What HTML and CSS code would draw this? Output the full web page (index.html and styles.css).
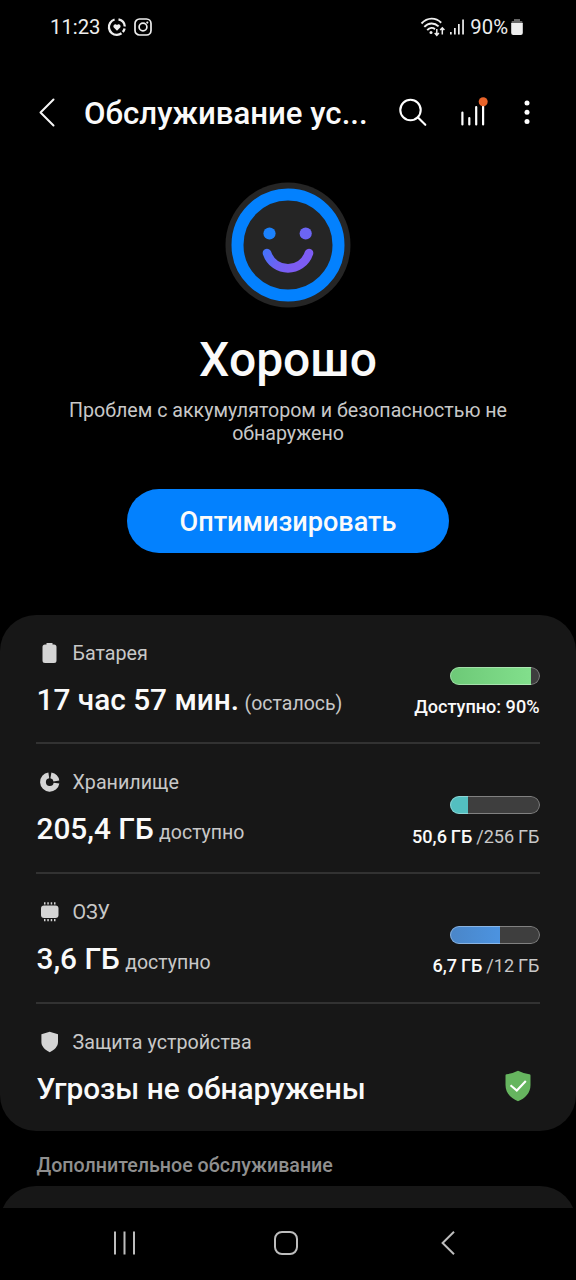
FILE: index.html
```html
<!DOCTYPE html>
<html lang="ru">
<head>
<meta charset="utf-8">
<title>Обслуживание устройства</title>
<link rel="stylesheet" href="styles.css">
</head>
<body>
<div class="screen">
  <header class="status">
    <div class="status-left">
      <span class="clock">11:23</span>
      <svg class="status-icon" width="18" height="18" viewBox="0 0 18 18" fill="none" stroke="#eee" stroke-width="2.3"><path d="M6.600 1.500A7.800 7.800 0 0 0 9 16.800 7.800 7.800 0 0 0 13.500 15.300M10.500 1.400A7.800 7.800 0 0 1 16.800 8.500M16.600 10.500A8 8 0 0 1 14.800 14"/><path d="M9 12.800 5.800 9.500C4.400 7.600 7.200 4.900 9 7c1.800-2.100 4.600.6 3.200 2.500z" fill="#eee" stroke="none"/></svg>
      <svg class="status-icon" width="18" height="18" viewBox="0 0 18 18" fill="none" stroke="#eee" stroke-width="1.7"><rect x="1" y="1" width="16" height="16" rx="4.5"/><circle cx="9" cy="9" r="3.9"/><circle cx="13.3" cy="4.6" r="1.1" fill="#eee" stroke="none"/></svg>
    </div>
    <div class="status-right">
      <svg width="26" height="20" viewBox="0 0 26 20" fill="none" stroke="#eee" stroke-width="1.9"><path d="M1.500 6.500C7.500.2 15.500.2 21.200 5.700"/><path d="M4.300 9.900C8.500 5.400 14.500 5.400 18.600 9.400"/><path d="M7.200 13.200C9.800 10.400 13 10.400 15 12.200"/><circle cx="11" cy="15.500" r="1.500" fill="#eee" stroke="none"/><path d="M16.800 12v6.300M14.700 16.100l2.100 2.200 2.100-2.200M22.300 17.500V11M20.200 13.100l2.100-2.200 2.100 2.200" stroke-width="1.500"/></svg>
      <svg width="16" height="18" viewBox="0 0 16 18" fill="#eee"><path d="M1 14h1.700v2.500H1zM5 10h1.700v6.500H5zM9 6h1.700v10.500H9zM13.200 1.500h1.700v15h-1.700z"/></svg>
      <span class="percent">90%</span>
      <svg width="12" height="18" viewBox="0 0 12 18"><path d="M3 1h6v2h1.500q1 0 1 1V6H.5V4q0-1 1-1H3z" fill="#666"/><path d="M.2 5h11.600v10q0 2-2 2H2.200q-2 0-2-2z" fill="#eee"/></svg>
    </div>
  </header>

  <nav class="appbar">
    <svg class="back" width="18" height="30" viewBox="0 0 18 30" fill="none" stroke="#f5f5f5" stroke-width="2" stroke-linecap="round" stroke-linejoin="round"><path d="M15.500 1.500 2.500 14.500l13 13"/></svg>
    <h1 class="title">Обслуживание ус...</h1>
    <svg class="search" width="28" height="28" viewBox="0 0 28 28" fill="none" stroke="#fff" stroke-width="2.100" stroke-linecap="round"><circle cx="11.500" cy="11" r="10.200"/><path d="m19 18.500 7.300 7.300"/></svg>
    <svg class="chart" width="30" height="30" viewBox="0 0 30 30"><path d="M2.400 14.500v12M9.300 20v6.500M16.200 9v17.500M23.100 6v20.500" stroke="#fff" stroke-width="2.200" stroke-linecap="round"/><circle cx="23.200" cy="3.800" r="4.500" fill="#e8642a"/></svg>
    <svg class="more" width="6" height="26" viewBox="0 0 6 26" fill="#fff"><circle cx="3" cy="2.900" r="2.500"/><circle cx="3" cy="12.200" r="2.500"/><circle cx="3" cy="21.600" r="2.500"/></svg>
  </nav>

  <section class="hero">
    <svg class="face" width="126" height="126" viewBox="0 0 126 126">
      <defs><linearGradient id="mood" gradientUnits="userSpaceOnUse" x1="38" y1="50" x2="88" y2="82"><stop offset="0" stop-color="#2a7dfb"/><stop offset=".5" stop-color="#6f62f5"/><stop offset=".75" stop-color="#7d5cf3"/><stop offset="1" stop-color="#7d5cf3"/></linearGradient></defs>
      <circle cx="63" cy="63" r="62.500" fill="#252525"/>
      <circle cx="63" cy="63" r="50.500" fill="none" stroke="#0381fe" stroke-width="12"/>
      <circle cx="44.500" cy="51.500" r="6.100" fill="#1b82fc"/>
      <circle cx="80.700" cy="51.500" r="6.100" fill="#6c65f4"/>
      <path d="M42 71C49 91.500 77 91.500 84 71" fill="none" stroke="url(#mood)" stroke-width="8.600" stroke-linecap="round"/>
    </svg>
    <h2 class="verdict">Хорошо</h2>
    <p class="summary">Проблем с аккумулятором и безопасностью не обнаружено</p>
    <button class="optimize">Оптимизировать</button>
  </section>

  <main class="card">
    <section class="row">
      <div class="info">
        <div class="label"><svg width="26" height="24" viewBox="0 0 26 24" fill="#d4d4d4"><path d="M10.500 1h6v1.500H18Q20.500 2.500 20.500 5v13.500Q20.500 21 18 21H9Q6.500 21 6.500 18.500V5Q6.500 2.500 9 2.500h1.500z"/></svg><span>Батарея</span></div>
        <div class="value">17 час 57 мин. <small>(осталось)</small></div>
      </div>
      <div class="usage"><div class="meter"><div class="fill battery" style="width:90%"></div></div><div class="amount"><b>Доступно: 90%</b></div></div>
    </section>
    <section class="row">
      <div class="info">
        <div class="label"><svg width="26" height="24" viewBox="0 0 26 24" fill="none" stroke="#d4d4d4" stroke-width="5.800"><path d="M12.800 4.300a6.800 6.800 0 1 0 7.700 7.800"/><path d="M14.900 4.300a6.800 6.800 0 0 1 5.500 5.700"/></svg><span>Хранилище</span></div>
        <div class="value">205,4 ГБ <small>доступно</small></div>
      </div>
      <div class="usage"><div class="meter"><div class="fill storage" style="width:20%"></div></div><div class="amount"><b>50,6 ГБ</b> /256 ГБ</div></div>
    </section>
    <section class="row">
      <div class="info">
        <div class="label"><svg width="26" height="24" viewBox="0 0 26 24" fill="#d4d4d4"><rect x="5" y="4.500" width="17.500" height="12.500" rx="3"/><path d="M8 1.200h1.500v2.200H8zM11.300 1.200h1.500v2.200h-1.500zM14.700 1.200h1.500v2.200h-1.500zM18 1.200h1.500v2.200H18zM8 18.100h1.500v2.200H8zM11.300 18.100h1.500v2.200h-1.500zM14.700 18.100h1.500v2.200h-1.500zM18 18.100h1.500v2.200H18z"/></svg><span>ОЗУ</span></div>
        <div class="value">3,6 ГБ <small>доступно</small></div>
      </div>
      <div class="usage"><div class="meter"><div class="fill memory" style="width:55%"></div></div><div class="amount"><b>6,7 ГБ</b> /12 ГБ</div></div>
    </section>
    <section class="row">
      <div class="info">
        <div class="label"><svg width="26" height="24" viewBox="0 0 26 24" fill="#d4d4d4"><path d="M13.700.8 22 3.200v7.800c0 4.500-3.600 8-8.300 10.200C9 19 5.400 15.500 5.400 11V3.200z"/></svg><span>Защита устройства</span></div>
        <div class="value">Угрозы не обнаружены</div>
      </div>
      <svg class="safe" width="26" height="32" viewBox="0 0 26 32"><path d="M13 .8Q19 3.800 24.300 4.200q1.200.1 1.200 1.300V15C25.500 23 20 28.500 13 31.300 6 28.500.5 23 .5 15V5.500Q.5 4.300 1.700 4.200 7 3.800 13 .8z" fill="#66b55f"/><path d="m5.500 15.300 6.300 5.200 9-9.500" fill="none" stroke="#fff" stroke-width="2.100"/></svg>
    </section>
  </main>

  <h3 class="section-title">Дополнительное обслуживание</h3>
  <div class="card next"></div>

  <footer class="navbar">
    <svg width="24" height="24" viewBox="0 0 24 24" stroke="#bdbdbd" stroke-width="2"><path d="M2 .5v23M11.500.5v23M21 .5v23"/></svg>
    <svg width="24" height="24" viewBox="0 0 24 24" fill="none" stroke="#bdbdbd" stroke-width="2"><rect x="1" y="1" width="22" height="22" rx="7"/></svg>
    <svg class="nav-back" width="14" height="24" viewBox="0 0 14 24" fill="none" stroke="#bdbdbd" stroke-width="2"><path d="M13 .8 1.600 12 13 23.200"/></svg>
  </footer>
</div>
</body>
</html>
```
FILE: styles.css
```css
* { box-sizing: border-box; }
body { margin: 0; background: #000; color: #fafafa; font-family: Roboto, sans-serif; }
h1, h2, h3, p { margin: 0; font-weight: 500; white-space: nowrap; }
svg { display: block; flex: none; overflow: visible; }
.screen { width: 576px; height: 1280px; overflow: hidden; display: flex; flex-direction: column; }

.status { height: 53px; flex: none; padding: 0 53px 0 50px; display: flex; justify-content: space-between; align-items: center; font-size: 20.3px; color: #eee; }
.status-left, .status-right { display: flex; align-items: center; }
.status-icon { margin-left: 7.5px; }
.status-right svg:nth-child(2) { margin-left: 3px; }
.percent { margin: 0 3px 0 5px; }

.appbar { height: 119px; flex: none; display: flex; align-items: center; padding-left: 38px; }
.title { width: 286px; margin-left: 28px; font-size: 31.2px; line-height: 40px; padding-top: 3px; }
.search { margin-left: 29px; }
.chart { margin-left: 33px; }
.more { margin-left: 34px; }

.hero { height: 443px; flex: none; display: flex; flex-direction: column; align-items: center; padding-top: 10px; }
.face { margin-right: 1px; }
.verdict { margin-top: 24px; font-size: 48px; line-height: 56px; }
.summary { width: 460px; margin-top: 11px; font-size: 19.63px; line-height: 23px; font-weight: 400; color: #c8c8c8; text-align: center; white-space: normal; }
.optimize { width: 322px; height: 64px; margin-top: 43.500px; padding: 3px 0 0; border: 0; border-radius: 32px; background: #0381fe; color: #fafafa; font: 500 27.1px/61px Roboto, sans-serif; }

.card { flex: none; height: 516px; padding: 0 36px; border-radius: 36px; background: #171717; }
.row { height: 129.6px; display: flex; justify-content: space-between; }
.row + .row { border-top: 2px solid #323232; }
.row:first-child { height: 127.4px; }
.info { padding-top: 27px; }
.label { display: flex; align-items: center; gap: 10.5px; font-size: 19.7px; line-height: 24px; color: #c8c8c8; }
.value { margin-top: 16px; padding-left: .5px; font-size: 29.8px; line-height: 36px; font-weight: 500; white-space: nowrap; }
.value small { margin-left: -2px; font-size: 19.5px; font-weight: 400; color: #c8c8c8; }
.usage { padding-top: 52px; display: flex; flex-direction: column; align-items: flex-end; }
.meter { width: 90px; height: 18px; border-radius: 9px; background: #3e3e3e; overflow: hidden; position: relative; }
.meter::after { content: ""; position: absolute; inset: 0; border: 1px solid rgba(255, 255, 255, .35); border-radius: 9px; }
.fill { height: 100%; }
.battery { background: linear-gradient(90deg, #6dc977, #82df8c); }
.storage { background: #53bfc0; }
.memory { background: linear-gradient(90deg, #4a86c8, #4c93e0); }
.amount { margin: 11px .5px 0 0; font-size: 18.1px; line-height: 22px; color: #c8c8c8; white-space: nowrap; }
.row + .row .amount { margin-top: 11.500px; word-spacing: -.6px; }
.amount b { font-weight: 500; color: #fafafa; }
.safe { margin: 66px 9px 0 0; }

.section-title { height: 55px; flex: none; padding: 23px 0 0 36.5px; font-size: 19.65px; line-height: 24px; color: #8f8f8f; }
.next { height: 80px; margin-bottom: -58px; }

.navbar { position: relative; height: 72px; flex: none; display: flex; align-items: center; gap: 137px; padding: 0 0 2px 113px; background: #000; }
.nav-back { margin-left: 5.500px; }
```
